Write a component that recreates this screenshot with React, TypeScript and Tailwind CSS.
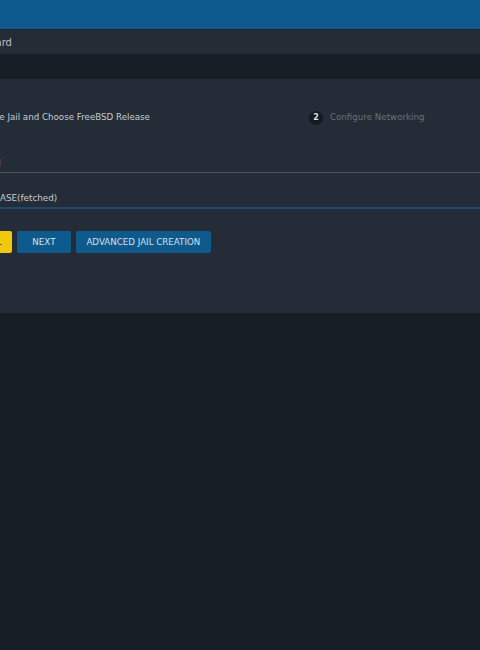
import React from 'react';

const font = "font-['DejaVu_Sans','Liberation_Sans',sans-serif]";

export default function App() {
  return (
    <div className={`min-h-[650px] w-full overflow-hidden bg-[#181e26] ${font}`}>
      <div className="h-[29px] bg-[#0e5a8e]" />
      <div className="h-[25px] border-t border-[#1d232b] bg-[#252c35]">
        <div className="-ml-[100px] flex h-full items-center pl-[60px] text-[10px] text-[#b9c0c7] whitespace-nowrap">
          Jail Wizard
        </div>
      </div>
      <div className="h-[25px] bg-[#181e26]" />

      <div className="h-[234px] bg-[#242d37]">
        <div className="-ml-[100px] w-[700px] pt-[31px]">
          {/* stepper */}
          <div className="flex h-[15px] items-center pl-[58px] text-[8.7px] whitespace-nowrap">
            <div className="flex items-center gap-[7px]">
              <span className="flex h-[14px] w-[14px] items-center justify-center rounded-full bg-[#0e5a8e] text-[8px] text-white">1</span>
              <span className="text-[#c6ccd2]">Name Jail and Choose FreeBSD Release</span>
            </div>
            <div className="ml-[159px] flex items-center gap-[7px]">
              <span className="flex h-[14px] w-[14px] items-center justify-center rounded-full bg-[#151b22] text-[8px] font-bold text-[#dde2e7]">2</span>
              <span className="text-[#68717b]">Configure Networking</span>
            </div>
          </div>

          {/* jail name */}
          <div className="mt-[32px] ml-[55px] border-b border-[#4b5259] pb-[1px]">
            <div className="flex h-[14px] items-center pl-[16px] text-[8.8px] text-[#c6ccd2] whitespace-nowrap">testjail</div>
          </div>

          {/* release */}
          <div className="mt-[19px] ml-[55px] border-b-2 border-[#1b4b6f] pb-[1px]">
            <div className="flex h-[14px] items-center text-[8.8px] text-[#c6ccd2] whitespace-nowrap">13.2-RELEASE(fetched)</div>
          </div>

          {/* actions */}
          <div className="mt-[22px] flex gap-[5px] pl-[56px] text-[8.7px] whitespace-nowrap">
            <button className="h-[22px] rounded-[2px] bg-[#f2c80f] px-[10.5px] pt-[1px] text-[#1b2128]">CANCEL</button>
            <button className="h-[22px] min-w-[54px] rounded-[2px] bg-[#0f5a8c] px-[10.5px] pt-[1px] text-[#d6e0e9]">NEXT</button>
            <button className="h-[22px] rounded-[2px] bg-[#0f5a8c] px-[10.5px] pt-[1px] text-[#d6e0e9]">ADVANCED JAIL CREATION</button>
          </div>
        </div>
      </div>
    </div>
  );
}
